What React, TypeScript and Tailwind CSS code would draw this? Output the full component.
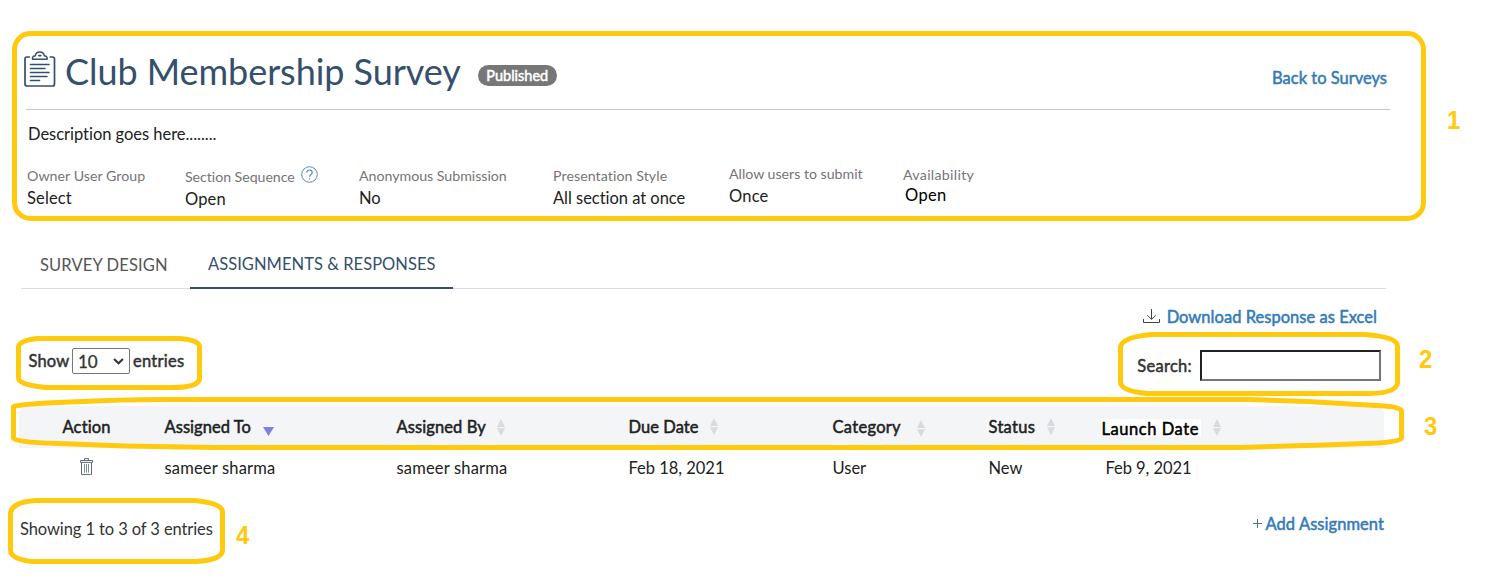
import React from "react";

const strong = "[-webkit-text-stroke:0.5px_currentColor]";

function ClipboardIcon() {
  return (
    <svg width="32" height="37" viewBox="0 0 32 37" fill="none" stroke="#34506c" strokeWidth="1.7" strokeLinecap="round" strokeLinejoin="round" className="-ml-[2px] shrink-0">
      <path d="M5.2 6H3Q1 6 1 8V33Q1 35 3 35H28.5Q30.5 35 30.5 33V8Q30.5 6 28.5 6H26.3" />
      <path d="M8.5 8.2V6.6Q8.8 5.2 11.2 4.8Q12 1 15.8 1Q19.6 1 20.4 4.8Q22.8 5.2 23.1 6.6V8.2Z" strokeWidth="1.5" />
      <path d="M14.8 4.6H16.8" strokeWidth="1.6" />
      <path d="M6.5 13.5H25M6.5 17.5H21M6.5 21.5H25M6.5 25.5H23M6.5 29.5H15.5" strokeWidth="1.6" />
    </svg>
  );
}

function HelpIcon() {
  return (
    <svg width="17" height="17" viewBox="0 0 17 17" fill="none" stroke="#5b86b8" strokeWidth="1">
      <circle cx="8.5" cy="8.5" r="7.8" />
      <path d="M5.8 6.6C5.8 4.9 6.9 4 8.5 4S11.2 5 11.2 6.5C11.2 8.4 8.6 8.5 8.6 10.8" strokeWidth="1.2" />
      <path d="M8.6 12.2V13.4" strokeWidth="1.2" />
    </svg>
  );
}

function DownloadIcon() {
  return (
    <svg width="17" height="15" viewBox="0 0 17 15" fill="none" stroke="#444" strokeWidth="1">
      <path d="M8.5 0V10.2M4.3 6.2L8.5 10.4L12.7 6.2M0.5 10V13.5H16.5V10" />
    </svg>
  );
}

function TrashIcon() {
  return (
    <svg width="13" height="17" viewBox="0 0 13 17" fill="none" stroke="#5c6b80" strokeWidth="1">
      <path d="M4.5 2V0.6H8.5V2M0.5 4.4V2.5H12.5V4.4H0.5M1.5 4.5V16.4H11.5V4.5" />
      <path d="M4.5 6V14.6M6.5 6V14.6M8.5 6V14.6" stroke="#7c8ba6" />
    </svg>
  );
}

function SortIcon({ className }: { className: string }) {
  return (
    <svg width="8" height="17" viewBox="0 0 8 17" fill="#d9dadb" className={className}>
      <path d="M4 0L8 8H0ZM0 9.3H8L4 17Z" />
    </svg>
  );
}

const meta = [
  { label: "Owner User Group", value: "Select", box: "w-[158px] pt-[1px]", l: "tracking-[0.04px]", v: "tracking-[0.15px]" },
  { label: "Section Sequence", value: "Open", box: "w-[174px] pt-[2px]", l: "tracking-[-0.05px]", v: "tracking-[0.15px]", help: true },
  { label: "Anonymous Submission", value: "No", box: "w-[194px] pt-[1px]", l: "tracking-[-0.02px]", v: "" },
  { label: "Presentation Style", value: "All section at once", box: "w-[176px] pt-[1px]", l: "tracking-[0.07px]", v: "tracking-[-0.03px]" },
  { label: "Allow users to submit", value: "Once", box: "w-[174px] -mt-[1px]", l: "tracking-[-0.02px]", v: "tracking-[0.2px]" },
  { label: "Availability", value: "Open", box: "w-[100px]", l: "tracking-[0.3px] text-[#666]", v: "pl-[2px] -mt-[2px] text-black tracking-[0.35px]" },
];

const columns = [
  { name: "Action", box: "w-[102px]", text: "tracking-[0.15px]", sort: "" },
  { name: "Assigned To", box: "w-[232px]", text: "tracking-[0.05px]", sort: "active" },
  { name: "Assigned By", box: "w-[232px]", text: "tracking-[0.1px]", sort: "ml-[11px] mt-[2px]" },
  { name: "Due Date", box: "w-[204px]", text: "tracking-[0.05px]", sort: "ml-[12px] mt-[1px]" },
  { name: "Category", box: "w-[156px]", text: "tracking-[0.3px]", sort: "ml-[16px] mt-[3px]" },
  { name: "Status", box: "w-[113px]", text: "tracking-[0.3px]", sort: "ml-[12px] mt-[1px]" },
  { name: "Launch Date", box: "w-[200px]", text: "launch", sort: "ml-[12px] mt-[2px]" },
];

const row = [
  { text: "sameer sharma", box: "w-[232px] tracking-[0.18px]" },
  { text: "sameer sharma", box: "w-[232px] tracking-[0.18px]" },
  { text: "Feb 18, 2021", box: "w-[204px] tracking-[-0.02px]" },
  { text: "User", box: "w-[156px]" },
  { text: "New", box: "w-[117px]" },
  { text: "Feb 9, 2021", box: "w-[120px] tracking-[-0.06px]" },
];

function Annotations() {
  const num = "absolute font-['Liberation_Sans',sans-serif] text-[26px] leading-[28px] font-bold text-[#ffc90e] origin-left scale-x-[0.92]";
  return (
    <div className="pointer-events-none absolute inset-0">
      <svg width="1485" height="581" viewBox="0 0 1485 581" fill="none" stroke="#ffc90e" strokeWidth="5" strokeLinejoin="round" className="absolute inset-0">
        <rect x="14.5" y="33.5" width="1409" height="185" rx="16" />
        <path d="M38 338.5H179Q199.5 340 199.5 347V379Q198 387.5 172 387.5H46Q18.5 385 18.5 378V347Q20 340 38 338.5Z" />
        <path d="M1152 334.5H1365Q1397.5 337 1397.5 346V383Q1396 393 1370 393.5H1147Q1120.5 391 1120.5 382V347Q1122 337 1152 334.5Z" />
        <path d="M13.5 406.5Q20 404 70 402Q120 399.5 165 399.5H1250L1307 401.5L1350 404L1385 406Q1401.5 407.5 1401.5 411V438Q1400 441.5 1378 443L1325 445L1240 447.5H215L125 446L58 443.5Q13.5 442 13.5 438Z" />
        <path d="M36 500.5H194Q222.5 503 222.5 512V551Q221 560 196 561.5H32Q10.5 559 10.5 550V513Q12 502 36 500.5Z" />
      </svg>
      <span className={`${num} left-[1447px] top-[106px]`}>1</span>
      <span className={`${num} left-[1419px] top-[345px]`}>2</span>
      <span className={`${num} left-[1424px] top-[412px]`}>3</span>
      <span className={`${num} left-[236px] top-[521px]`}>4</span>
    </div>
  );
}

export default function App() {
  return (
    <div className="relative flex h-[581px] w-[1485px] flex-col overflow-hidden bg-white font-['Lato',sans-serif] text-[16.5px] leading-[20px] text-[#212121]">
      <header className="ml-[26px] flex h-[110px] w-[1364px] border-b border-[#c8c8c8] pt-[51px]">
        <ClipboardIcon />
        <h1 className="ml-[9px] text-[36px] leading-[40px] tracking-[-0.05px] whitespace-nowrap text-[#34506c]">Club Membership Survey</h1>
        <span className={`ml-[17px] mt-[14px] flex h-[21px] w-[79px] items-center justify-center rounded-full bg-[#777] text-[14.5px] leading-[20px] text-white ${strong}`}>Published</span>
        <a className={`mr-[3px] ml-auto mt-[17px] text-[#337ab7] ${strong}`}>Back to Surveys</a>
      </header>

      <p className="mt-[14px] ml-[28px] tracking-[-0.03px]">Description goes here........</p>

      <section className="mt-[21px] ml-[27px] flex h-[60px]">
        {meta.map((m) => (
          <div key={m.label} className={`flex flex-col whitespace-nowrap ${m.box}`}>
            <div className={`flex h-[22px] text-[14.2px] text-[#757575] ${m.l}`}>
              <span>{m.label}</span>
              {m.help && <span className="ml-[6px] -mt-[1px]"><HelpIcon /></span>}
            </div>
            <div className={m.v}>{m.value}</div>
          </div>
        ))}
      </section>

      <nav className="mt-[19px] ml-[21px] flex h-[45px] w-[1365px] border-b border-[#dcdcdc] whitespace-nowrap">
        <div className="w-[169px] pt-[11px] pl-[19px] tracking-[0.13px] text-[#555]">SURVEY DESIGN</div>
        <div className="-mb-px w-[263px] border-b-2 border-[#34506c] pt-[10px] pl-[18px] tracking-[0.04px] text-[#34506c]">ASSIGNMENTS &amp; RESPONSES</div>
      </nav>

      <div className="mt-[18px] mr-[108px] flex justify-end">
        <span className="mt-[2px] mr-[7px]"><DownloadIcon /></span>
        <a className={`tracking-[0.03px] text-[#337ab7] ${strong}`}>Download Response as Excel</a>
      </div>

      <div className="mt-[20px] ml-[28px] flex h-[59px] w-[1353px] justify-between">
        <label className={`flex text-[#333] ${strong}`}>
          <span className="mt-[4px] w-[44px] pl-[0.5px] tracking-[0.15px]">Show</span>
          <span className="mt-[1px] flex h-[26px] w-[58px] items-center rounded-[2px] border border-[#767676] bg-white pl-[5px] text-[17px] [-webkit-text-stroke:0.3px_currentColor]">
            <span className="mt-[2px] w-[35px]">10</span>
            <svg width="11" height="7" viewBox="0 0 11 7" fill="none" stroke="#333" strokeWidth="2"><path d="M1 1L5.5 5.3L10 1" /></svg>
          </span>
          <span className="mt-[4px] ml-[3px] tracking-[0.25px]">entries</span>
        </label>
        <label className={`flex text-[#333] ${strong}`}>
          <span className="mt-[9px] mr-[8px] tracking-[0.3px]">Search:</span>
          <input className="mt-[3px] h-[31px] w-[181px] border-2 border-t-[#212121] border-r-[#767676] border-b-[#767676] border-l-[#212121] bg-white" />
        </label>
      </div>

      <div className={`ml-[19px] flex h-[42px] w-[1365px] rounded-t-[8px] bg-[#f4f5f7] pt-[11px] pl-[43.5px] whitespace-nowrap ${strong}`}>
        {columns.map((c) => (
          <div key={c.name} className={`flex ${c.box}`}>
            {c.text === "launch" ? (
              <span className="mt-[2px] -ml-[1px] h-[18px] w-[100px] bg-white px-[1px] leading-[20px] tracking-[0.55px] text-black">{c.name}</span>
            ) : (
              <span className={c.text}>{c.name}</span>
            )}
            {c.sort === "active" ? (
              <svg width="11" height="9" viewBox="0 0 11 9" fill="#7c82de" className="mt-[10px] ml-[12px]"><path d="M0 0H11L5.5 9Z" /></svg>
            ) : (
              c.sort && <SortIcon className={c.sort} />
            )}
          </div>
        ))}
      </div>

      <div className="ml-[62.5px] flex h-[50px] pt-[10px] whitespace-nowrap">
        <div className="w-[102px] pl-[17.5px]"><TrashIcon /></div>
        {row.map((r, i) => (
          <div key={i} className={r.box}>{r.text}</div>
        ))}
      </div>

      <footer className="ml-[20px] flex w-[1364px] justify-between pt-[16px]">
        <span className="mt-[5px] text-[#333] tracking-[-0.1px]">Showing 1 to 3 of 3 entries</span>
        <a className="flex text-[#337ab7]">
          <svg width="9" height="9" viewBox="0 0 9 9" stroke="#4f7296" className="mt-[5px] mr-[4px]"><path d="M4.5 0V9M0 4.5H9" /></svg>
          <span className={`tracking-[0.06px] ${strong}`}>Add Assignment</span>
        </a>
      </footer>

      <Annotations />
    </div>
  );
}
